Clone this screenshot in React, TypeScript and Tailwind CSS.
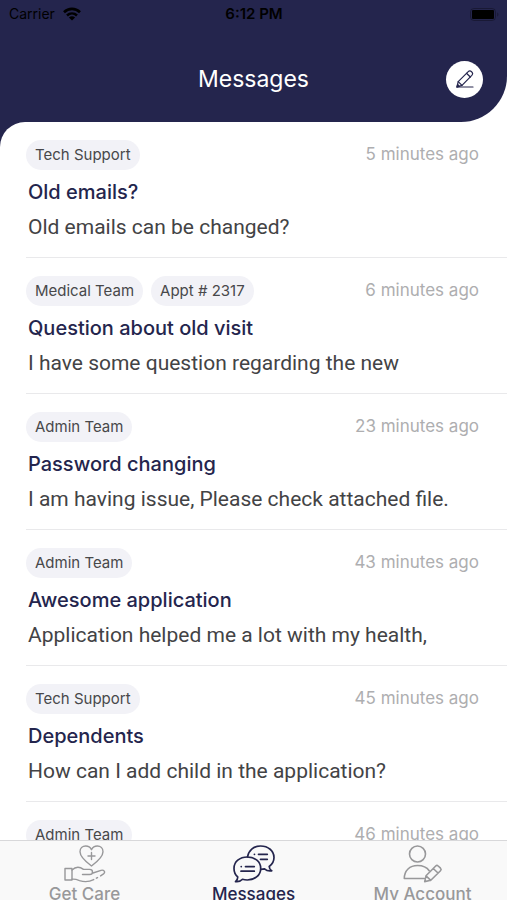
import type { ReactNode } from 'react';

type Message = {
  tags: string[];
  time: string;
  subject: string;
  preview: string;
};

const messages: Message[] = [
  { tags: ['Tech Support'], time: '5 minutes ago', subject: 'Old emails?', preview: 'Old emails can be changed?' },
  { tags: ['Medical Team', 'Appt # 2317'], time: '6 minutes ago', subject: 'Question about old visit', preview: 'I have some question regarding the new' },
  { tags: ['Admin Team'], time: '23 minutes ago', subject: 'Password changing', preview: 'I am having issue, Please check attached file.' },
  { tags: ['Admin Team'], time: '43 minutes ago', subject: 'Awesome application', preview: 'Application helped me a lot with my health,' },
  { tags: ['Tech Support'], time: '45 minutes ago', subject: 'Dependents', preview: 'How can I add child in the application?' },
  { tags: ['Admin Team'], time: '46 minutes ago', subject: '', preview: '' },
];

function StatusBar() {
  return (
    <div className="grid h-7 grid-cols-3 items-center pl-[9px] pr-2 text-sm text-black">
      <div className="flex items-center gap-2">
        <span>Carrier</span>
        <svg viewBox="0 0 18 14" className="h-[14px] w-[18px]" fill="none" stroke="currentColor" strokeWidth="2.6">
          <path d="M1 5.2C5.6.7 12.4.7 17 5.2" />
          <path d="M4 8.5C6.9 5.8 11.1 5.8 14 8.5" />
          <path d="M9 13.6 5.9 10.5C7.7 8.9 10.3 8.9 12.1 10.5Z" fill="currentColor" stroke="none" />
        </svg>
      </div>
      <span className="text-center text-[15px] font-semibold">6:12 PM</span>
      <svg viewBox="0 0 29 13" className="h-[13px] w-[29px] justify-self-end">
        <rect x="0.5" y="0.5" width="25" height="12" rx="3.5" fill="none" stroke="#000" strokeOpacity="0.3" />
        <rect x="2" y="2" width="22" height="9" rx="1" fill="#000" />
        <path d="M27 4.5c2 .6 2 3.4 0 4z" fill="#000" fillOpacity="0.25" />
      </svg>
    </div>
  );
}

function PencilIcon() {
  return (
    <svg viewBox="0 0 18 18" className="h-[18px] w-[18px]" fill="none" stroke="currentColor" strokeWidth="1.2" strokeLinejoin="round" strokeLinecap="round">
      <path d="M1 17 2.2 11.6 12 1.8C13 .8 14.5.7 15.6 1.7 16.8 2.8 16.8 4.3 15.8 5.4L6 15.4Z" />
      <path d="M10.5 3.3 14.3 7M2.2 11.6 6 15.4M1 17H17" />
      <path d="M1 17 1.6 14.4 3.4 16.3Z" fill="currentColor" />
    </svg>
  );
}

function CareIcon() {
  return (
    <svg viewBox="0 0 42 38" className="h-[38px] w-[42px]" fill="none" stroke="currentColor" strokeWidth="1.4" strokeLinejoin="round" strokeLinecap="round">
      <path d="M27.5 21C22.5 17.2 16 12 16 6.7 16 3.3 18.5 1 21.7 1 24.4 1 26.4 2.4 27.5 4.7 28.6 2.4 30.7 1 33.3 1 36.5 1 39 3.3 39 6.7 39 12 32.5 17.2 27.5 21Z" />
      <path d="M27.5 7.5V14.5M24 11H31" />
      <path d="M1 23.5H8V35H1Z" />
      <path d="M8 25C11.5 21.5 16 21.7 19.5 24.4H25.5C29.5 24.4 29.5 29.5 25.5 29.5H18.5" />
      <path d="M29 28 37 25.3C39.8 24.5 42 27 39.5 28.9L36.6 30.9M33.5 32.6 32.4 33.2M29.7 34.6C25 37 20 37 15.5 35.6 12.6 34.4 10.5 34 8 34.2" />
    </svg>
  );
}

function ChatIcon() {
  return (
    <svg viewBox="0 0 42 38" className="h-[38px] w-[42px]" fill="none" stroke="currentColor" strokeWidth="1.7" strokeLinejoin="round" strokeLinecap="round">
      <path d="M14.5 11.8C15.5 5.5 20.5 1 27.5 1 35.2 1 41 5.8 41 12.5 41 16.2 39.2 19.3 36.2 21.5 36.3 23.3 37 24.7 38.7 25.8 35.8 26.3 33.4 25.6 31.5 23.9 30.4 24.2 29.2 24.3 27.8 24.3" />
      <path d="M14.3 12C22 12 27.7 16.8 27.7 23.4 27.7 30.1 22 35 14.3 35 12.6 35 11 34.8 9.5 34.3 7.8 36.2 5.5 37 2.5 36.6 4.2 35.3 4.8 33.6 4.7 31.8 2.3 29.7 1 26.8 1 23.4 1 16.8 6.6 12 14.3 12Z" />
      <path d="M25.5 9.3H34.3M27.5 14.3H34.3M12.5 21.6H21.3M8 26.2H21.3M21.4 9.3H21.5M8.2 21.6H8.3" />
    </svg>
  );
}

function AccountIcon() {
  return (
    <svg viewBox="0 0 42 38" className="h-[38px] w-[42px]" fill="none" stroke="currentColor" strokeWidth="1.6" strokeLinejoin="round" strokeLinecap="round">
      <circle cx="15.5" cy="9" r="8" />
      <path d="M22.3 33.5H2.3C2.3 25.5 7.8 20.5 15.5 20.5 20.3 20.5 24.7 22 27.2 25.7" />
      <path d="M24 30.8 33.7 21C34.5 20.2 35.4 20.2 36.2 21L38.5 23.2C39.3 24 39.3 24.9 38.5 25.7L28.8 35.3 22.7 36.6ZM24 30.8 28.8 35.3M31.2 23.5 36 28" />
    </svg>
  );
}

function MessageRow({ message }: { message: Message }) {
  return (
    <li className="ml-[26px] border-b border-[#e9e9eb] pb-3 pr-7 pt-[18px]">
      <div className="mb-[5px] flex items-center justify-between">
        <div className="flex gap-2">
          {message.tags.map((tag) => (
            <span key={tag} className="flex h-[30px] items-center rounded-full bg-[#f2f2f7] px-[9px] text-[15px] text-[#48484a]">
              {tag}
            </span>
          ))}
        </div>
        <time className="text-[17px] text-[#aeaeb0]">{message.time}</time>
      </div>
      <h2 className="ml-[2px] text-xl/[35px] font-medium text-[#24254d]">{message.subject}</h2>
      <p className="ml-[2px] whitespace-nowrap font-[Roboto,sans-serif] text-[21px]/[35px] text-[#434345]">{message.preview}</p>
    </li>
  );
}

function Tab({ label, icon, active = false }: { label: string; icon: ReactNode; active?: boolean }) {
  return (
    <a
      href="#"
      aria-current={active ? 'page' : undefined}
      className={`flex flex-col items-center pt-1 text-[17px]/[22px] font-medium ${active ? 'text-[#24254d]' : 'text-[#98989a]'}`}
    >
      {icon}
      <span>{label}</span>
    </a>
  );
}

export default function App() {
  return (
    <div className="flex h-screen flex-col overflow-hidden bg-white font-[Inter,sans-serif]">
      {/* Header */}
      <header className="shrink-0 rounded-br-[46px] bg-[#24254d]">
        <StatusBar />
        <div className="grid h-[94px] grid-cols-[1fr_auto_1fr] items-center px-6 pt-2">
          <h1 className="col-start-2 text-[23px] text-white">Messages</h1>
          <button type="button" aria-label="New message" className="flex size-[37px] items-center justify-center justify-self-end rounded-full bg-white text-[#24254d]">
            <PencilIcon />
          </button>
        </div>
      </header>

      {/* Message list */}
      <main className="min-h-0 flex-1 overflow-hidden bg-linear-to-r from-[#24254d] from-50% to-white to-50%">
        <ul className="min-h-full rounded-tl-[25px] bg-white">
          {messages.map((message) => (
            <MessageRow key={message.time} message={message} />
          ))}
        </ul>
      </main>

      {/* Tab bar */}
      <nav className="grid h-[60px] shrink-0 grid-cols-3 overflow-hidden border-t border-[#d8d8da] bg-[#f9f9f9]">
        <Tab label="Get Care" icon={<CareIcon />} />
        <Tab label="Messages" icon={<ChatIcon />} active />
        <Tab label="My Account" icon={<AccountIcon />} />
      </nav>
    </div>
  );
}
